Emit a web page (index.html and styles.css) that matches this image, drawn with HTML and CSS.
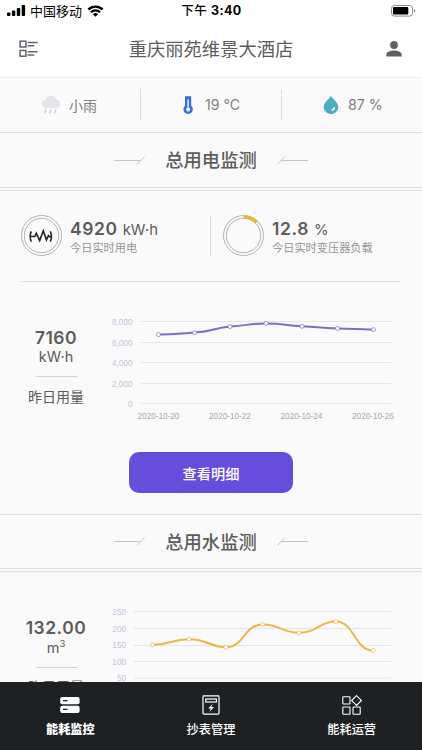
FILE: index.html
```
<!DOCTYPE html>
<html lang="zh-CN">
<head>
    <meta charset="UTF-8">
    <meta name="viewport" content="width=device-width, initial-scale=1.0">
    <title>能耗监控</title>
    <link rel="stylesheet" href="styles.css">
</head>
<body>
    <div class="status-bar">
        <div class="carrier">
            <svg width="19" height="12" viewBox="0 0 19 12">
                <rect x="0" y="7.5" width="3.4" height="3.5" rx="1"/>
                <rect x="4.9" y="5.5" width="3.4" height="5.5" rx="1"/>
                <rect x="9.8" y="3" width="3.4" height="8" rx="1"/>
                <rect x="14.7" y="0" width="3.4" height="11" rx="1"/>
            </svg>
            <span>中国移动</span>
            <svg class="wifi" width="17" height="12" viewBox="0 0 17 12">
                <path d="M1.4 4.6a10 10 0 0 1 14.2 0M4 7.3a6.4 6.4 0 0 1 9 0" fill="none" stroke="#000" stroke-width="2.3"/>
                <path d="M8.5 11.8L5.9 9.2a3.7 3.7 0 0 1 5.2 0z"/>
            </svg>
        </div>
        <div class="time">下午 <b>3:40</b></div>
        <svg class="battery" width="25" height="12" viewBox="0 0 25 12">
            <rect x=".5" y=".5" width="21" height="10.6" rx="3" fill="none" stroke="#8a8a8a"/>
            <rect x="2" y="2" width="15.3" height="7.6" rx="1.3"/>
            <path d="M23 4v3.6q1.4-.4 1.4-1.8T23 4z" fill="#8a8a8a"/>
        </svg>
    </div>

    <header class="header">
        <svg width="20" height="18" viewBox="0 0 20 18" fill="none" stroke="#626270" stroke-width="1.5">
            <rect x="2.1" y="1.2" width="5.8" height="5.8"/>
            <rect x="2.1" y="10.4" width="5.8" height="5.8"/>
            <path d="M9.6 2.5h10M9.6 5.7h6.6M9.6 11.7h10M9.6 14.9h6.6"/>
        </svg>
        <h1>重庆丽苑维景大酒店</h1>
        <svg width="16" height="16" viewBox="0 0 16 16" fill="#606060">
            <circle cx="8" cy="4" r="3.9"/>
            <path d="M.3 15.4v-1.8C.3 11 5 9.6 8 9.6s7.7 1.4 7.7 4v1.8z"/>
        </svg>
    </header>

    <main class="content">
        <section class="weather">
            <div class="weather-item rain">
                <svg width="20" height="20" viewBox="0 0 20 20">
                    <path d="M4.8 13a4.2 4.2 0 0 1-.5-8.3A5.8 5.8 0 0 1 15 4.2a4.5 4.5 0 0 1 .5 8.8z" fill="#e4e5e7"/>
                    <path d="M5 14.5l-1.5 3.8M10 14.5l-1.5 3.8M15 14.5l-1.5 3.8" fill="none" stroke="#a9cdec" stroke-width="1.2"/>
                </svg>
                <span>小雨</span>
            </div>
            <div class="weather-item temp">
                <svg width="10" height="20" viewBox="0 0 10 20">
                    <path d="M2 1.2h6.2v9.5a4.7 4.7 0 1 1-6.2 0z" fill="#386de0"/>
                    <path d="M5.1 4.5v8" stroke="#fff" stroke-width="1.4"/>
                    <circle cx="5.1" cy="14.5" r="2" fill="#fff"/>
                </svg>
                <span>19 °C</span>
            </div>
            <div class="weather-item humidity">
                <svg width="16" height="20" viewBox="0 0 16 20">
                    <path d="M8 .8C9.5 4 15.3 7.5 15.3 12a7.3 7.2 0 0 1-14.6 0C.7 7.5 6.5 4 8 .8z" fill="#48afbd"/>
                    <path d="M11.3 12.2c0 1.8-.9 2.7-2.6 2.9" fill="none" stroke="#fff" stroke-width="1.7"/>
                </svg>
                <span>87 %</span>
            </div>
        </section>

        <div class="section-title">
            <svg width="31" height="9" viewBox="0 0 31 9"><path d="M0 4.5h26M23 8.5l7.5-8"/></svg>
            <h2>总用电监测</h2>
            <svg width="31" height="9" viewBox="0 0 31 9"><path d="M31 4.5H4M.5 8.5l7.5-8"/></svg>
        </div>

        <section class="panel">
            <div class="metrics">
                <div class="metric">
                    <svg class="ring" width="42" height="42" viewBox="0 0 42 42">
                        <circle cx="20.5" cy="20.5" r="20"/>
                        <circle cx="20.5" cy="20.5" r="17.2"/>
                        <path d="M10.3 16.3q-2.3 5 0 10.3M9 21.5h4.8l1.500-3.400 3.400 7.500 3.600-9.800 3.100 9 2-4.200 1 1.200h2.600M29.300 16.300q2.300 5 0 10.300" class="wave"/>
                    </svg>
                    <div>
                        <div class="value">4920 <span>kW·h</span></div>
                        <div class="label">今日实时用电</div>
                    </div>
                </div>
                <div class="metric load">
                    <svg class="ring" width="42" height="42" viewBox="0 0 42 42">
                        <circle cx="20.5" cy="20.5" r="20"/>
                        <circle cx="20.5" cy="20.5" r="17.2"/>
                        <path d="M20.5 1.9a18.6 18.6 0 0 1 13.2 5.4" class="arc"/>
                    </svg>
                    <div>
                        <div class="value">12.8 <span>%</span></div>
                        <div class="label">今日实时变压器负载</div>
                    </div>
                </div>
            </div>

            <div class="usage">
                <div class="summary">
                    <strong>7160</strong>
                    <span class="unit">kW·h</span>
                    <span class="name">昨日用量</span>
                </div>
                <svg class="chart" width="300" height="124" viewBox="102 305 300 124">
                    <path class="grid" d="M141 321.500h250M141 342.500h250M141 362.500h250M141 383.500h250M141 403.500h250"/>
                    <g class="axis-y">
                        <text x="132.5" y="324.5">8,000</text>
                        <text x="132.5" y="345.5">6,000</text>
                        <text x="132.5" y="366">4,000</text>
                        <text x="132.5" y="386.5">2,000</text>
                        <text x="132.5" y="407">0</text>
                    </g>
                    <g class="axis-x">
                        <text x="158.5" y="418.7">2020-10-20</text>
                        <text x="230" y="418.7">2020-10-22</text>
                        <text x="301.5" y="418.7">2020-10-24</text>
                        <text x="373" y="418.7">2020-10-26</text>
                    </g>
                    <g class="series purple">
                        <path d="M158.5 334.6C176 334.6 178 333.7 194.5 332.6C212 331.4 212 328.5 230 326.6C248 325.8 248 323.4 266 323.4C284 323.4 284 325.3 302 326.3C320 327.3 320 327.9 337.5 328.4C355 328.9 356 329.2 373.5 329.7"/>
                        <circle cx="158.5" cy="334.6" r="2"/>
                        <circle cx="194.5" cy="332.6" r="2"/>
                        <circle cx="230" cy="326.6" r="2"/>
                        <circle cx="266" cy="323.4" r="2"/>
                        <circle cx="302" cy="326.3" r="2"/>
                        <circle cx="337.5" cy="328.4" r="2"/>
                        <circle cx="373.5" cy="329.7" r="2"/>
                    </g>
                </svg>
            </div>
            <button class="detail-btn" type="button">查看明细</button>
        </section>

        <div class="section-title water-title">
            <svg width="31" height="9" viewBox="0 0 31 9"><path d="M0 4.5h26M23 8.5l7.5-8"/></svg>
            <h2>总用水监测</h2>
            <svg width="31" height="9" viewBox="0 0 31 9"><path d="M31 4.5H4M.5 8.5l7.5-8"/></svg>
        </div>

        <section class="panel">
            <div class="usage water">
                <div class="summary">
                    <strong>132.00</strong>
                    <span class="unit cubic">m<sup>3</sup></span>
                    <span class="name">昨日用量</span>
                </div>
                <svg class="chart" width="300" height="124" viewBox="102 595 300 124">
                    <path class="grid" d="M134 611.5h257M134 628.5h257M134 645.5h257M134 661.5h257M134 678h257"/>
                    <g class="axis-y">
                        <text x="126" y="615">250</text>
                        <text x="126" y="631.5">200</text>
                        <text x="126" y="648.2">150</text>
                        <text x="126" y="664.7">100</text>
                        <text x="126" y="681.2">50</text>
                    </g>
                    <g class="series yellow">
                        <path d="M152.5 644.7C171 644.7 171 639.2 189 639.2C208 639.2 210 647.3 226 647.3C244 647.3 244 624.5 262.5 624.5C281 624.5 281 632.7 299 632.7C318 632.7 318 621.6 336 621.6C354.5 621.6 354.5 650.5 373 650.5"/>
                        <circle cx="152.5" cy="644.7" r="2"/>
                        <circle cx="189" cy="639.2" r="2"/>
                        <circle cx="226" cy="647.3" r="2"/>
                        <circle cx="262.5" cy="624.5" r="2"/>
                        <circle cx="299" cy="632.7" r="2"/>
                        <circle cx="336" cy="621.6" r="2"/>
                        <circle cx="373" cy="650.5" r="2"/>
                    </g>
                </svg>
            </div>
        </section>
    </main>

    <nav class="tab-bar">
        <a class="tab active">
            <svg width="20" height="20" viewBox="0 0 20 20">
                <rect x=".2" y="2" width="19.4" height="7.3" rx="2" fill="#fff"/>
                <rect x=".2" y="10.8" width="19.4" height="7.3" rx="2" fill="#fff"/>
                <path d="M3 5.6h4.5M3 14.4h4.5" stroke="#1e2123" stroke-width="1.1"/>
            </svg>
            <span>能耗监控</span>
        </a>
        <a class="tab">
            <svg width="20" height="20" viewBox="0 0 20 20" fill="none" stroke="#fff" stroke-width="1.2">
                <rect x="2" y=".9" width="16" height="18.2" rx=".8"/>
                <rect x="4.8" y="4" width="10.6" height="3"/>
                <path d="M11.6 8.8L7.2 13.4h2.6L8.4 17l4.6-4.9h-2.7z" fill="#fff" stroke="none"/>
            </svg>
            <span>抄表管理</span>
        </a>
        <a class="tab">
            <svg width="20" height="20" viewBox="0 0 20 20" fill="none" stroke="#fff" stroke-width="1.1">
                <rect x=".8" y="1.8" width="7.2" height="7.2" rx=".5"/>
                <rect x=".8" y="12" width="7.2" height="7.2" rx=".5"/>
                <rect x="11" y="12" width="7.2" height="7.2" rx=".5"/>
                <path d="M14.5.6l4.9 4.9-4.9 4.9-4.9-4.9z"/>
            </svg>
            <span>能耗运营</span>
        </a>
    </nav>
</body>
</html>
```
FILE: styles.css
```
* {
    box-sizing: border-box;
}

body {
    margin: 0;
    height: 750px;
    display: flex;
    flex-direction: column;
    overflow: hidden;
    background: #fff;
    color: #5c5c5c;
    font-family: Inter, "Noto Sans CJK SC", sans-serif;
}

svg {
    display: block;
    flex: none;
}

h1, h2 {
    margin: 0;
}

/* Status bar */
.status-bar {
    height: 22px;
    padding: 0 6px 0 7px;
    display: grid;
    grid-template-columns: 1fr auto 1fr;
    align-items: center;
    color: #000;
    font-size: 13px;
    line-height: 22px;
}

.carrier {
    display: flex;
    align-items: center;
    gap: 4px;
}

.carrier .wifi {
    margin-left: 1px;
}

.battery {
    justify-self: end;
}

.time {
    font-size: 12.5px;
    font-weight: 500;
    letter-spacing: 0.4px;
}

/* Header */
.header {
    height: 55px;
    padding: 0 20px 1px 18px;
    display: flex;
    align-items: center;
    justify-content: space-between;
}

.header h1 {
    margin-right: 2px;
    font-size: 18.3px;
    line-height: 26px;
    font-weight: 400;
}

.content {
    flex: 1;
    min-height: 0;
    overflow: hidden;
    background: #fafafa;
    border-top: 1px solid #ededed;
}

/* Weather */
.weather {
    height: 55px;
    padding-bottom: 1px;
    display: grid;
    grid-template-columns: 141px 141px 140px;
    align-items: center;
    border-bottom: 1px solid #dedede;
    font-size: 14.2px;
    color: #808080;
}

.weather-item {
    height: 30px;
    display: flex;
    align-items: center;
    gap: 9px;
    padding-left: 41px;
    border-right: 1px solid #dcdcdc;
}

.weather-item.rain {
    gap: 8px;
    font-size: 14px;
}

.weather-item.temp {
    gap: 12px;
    padding-left: 42px;
}

.weather-item:last-child {
    border-right: 0;
}

/* Section titles */
.section-title {
    height: 58px;
    padding-bottom: 0;
    display: flex;
    align-items: center;
    justify-content: center;
    gap: 20px;
    border-bottom: 4px double #dedede;
}

.section-title h2 {
    font-size: 18.3px;
    line-height: 26px;
    font-weight: 500;
}

.section-title path {
    fill: none;
    stroke: #c4c4c4;
}

/* Energy metrics */
.panel {
    padding: 0 21px;
}

.metrics {
    height: 91px;
    display: flex;
    align-items: center;
    border-bottom: 1px solid #e0e0e0;
}

.metric {
    width: 189px;
    height: 42px;
    display: flex;
    align-items: center;
    gap: 7px;
}

.metric.load {
    width: 191px;
    padding-left: 12px;
    border-left: 1px solid #dedede;
}

.ring circle {
    fill: none;
    stroke: #aaa;
    stroke-width: 0.9;
}

.ring .wave {
    fill: none;
    stroke: #262020;
    stroke-width: 1.6;
}

.ring .arc {
    fill: none;
    stroke: #e9b53b;
    stroke-width: 3.4;
}

.value {
    padding-top: 2px;
    font-size: 17.5px;
    line-height: 20px;
    font-weight: 600;
    letter-spacing: 0.6px;
    white-space: nowrap;
}

.value span {
    font-size: 14.8px;
    font-weight: 400;
    letter-spacing: 0;
}

.label {
    font-size: 11.2px;
    line-height: 16px;
    color: #959595;
}

/* Usage charts */
.usage {
    height: 148px;
    padding-top: 23px;
    display: flex;
    gap: 11px;
}

.summary {
    width: 70px;
    flex: none;
    padding-top: 22px;
    display: flex;
    flex-direction: column;
    align-items: center;
}

.summary strong {
    font-size: 17.5px;
    line-height: 22px;
    font-weight: 600;
    letter-spacing: 0.5px;
}

.summary .unit {
    width: 41px;
    height: 28px;
    border-bottom: 1px solid #d2d2d2;
    font-size: 14.5px;
    line-height: 16px;
    text-align: center;
}

.summary .cubic {
    height: 29px;
    line-height: 18px;
}

.cubic sup {
    font-size: 9.5px;
    line-height: 0;
}

.summary .name {
    margin-top: 10px;
    font-size: 14px;
    line-height: 20px;
}

.water .summary .name {
    margin-top: 9px;
}

.grid {
    stroke: #e4e4e4;
}

.chart text {
    font-family: "Liberation Sans", Arial, sans-serif;
    font-size: 8.2px;
}

.axis-y {
    text-anchor: end;
    fill: #c6c2d8;
}

.axis-x {
    text-anchor: middle;
    fill: #a6a5ba;
}

.series {
    stroke: #7a71c7;
}

.series.yellow {
    stroke: #eab74a;
}

.series path {
    fill: none;
    stroke-width: 2;
}

.series circle {
    fill: #fff;
    stroke-width: 0.7;
}

.detail-btn {
    display: block;
    width: 164px;
    height: 41px;
    margin: 22px auto 21px;
    padding: 0;
    border: 0;
    border-radius: 10px;
    background: #674ddb;
    color: #fff;
    font-family: inherit;
    font-size: 14.2px;
    font-weight: 500;
}

.water-title {
    border-top: 1px solid #dedede;
}

/* Bottom tabs */
.tab-bar {
    height: 68px;
    flex: none;
    display: grid;
    grid-template-columns: repeat(3, 1fr);
    background: #1e2123;
    color: #fff;
}

.tab {
    display: flex;
    flex-direction: column;
    align-items: center;
    padding-top: 13px;
    font-size: 12.2px;
    line-height: 18px;
    font-weight: 500;
}

.tab span {
    margin-top: 6px;
}

.tab.active {
    font-weight: 900;
}
```
